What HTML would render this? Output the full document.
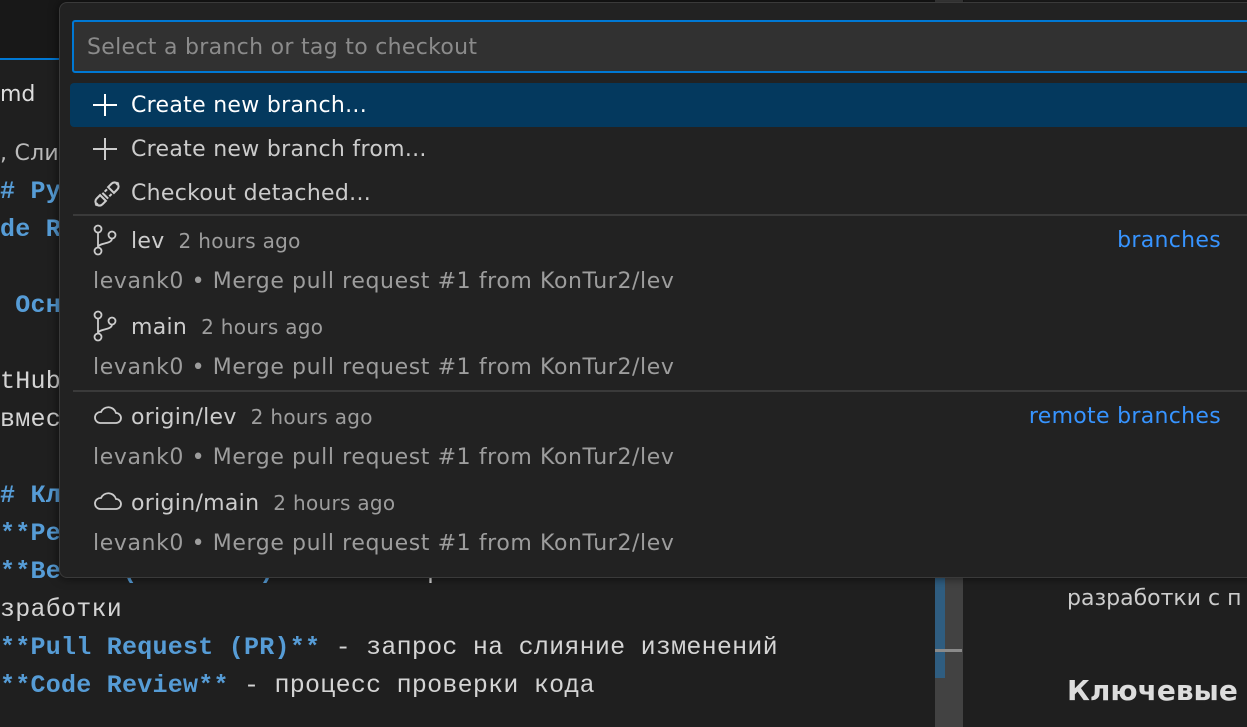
<!DOCTYPE html>
<html><head><meta charset="utf-8"><style>
*{margin:0;padding:0;box-sizing:border-box}
body{width:1247px;height:727px;overflow:hidden;background:#1f1f1f;position:relative;font-family:"DejaVu Sans","Liberation Sans",sans-serif}
.top{position:absolute;left:0;top:0;width:1247px;height:60px;background:#181818}
.tabline{position:absolute;left:0;top:58px;width:70px;height:2px;background:#0078d4}
.tab{position:absolute;left:0;top:60px;width:80px;height:70px;background:#1f1f1f}
.ed{position:absolute;left:0;font-family:"Liberation Mono","DejaVu Sans Mono",monospace;font-size:25px;letter-spacing:0.25px;color:#d4d4d4;white-space:pre;line-height:38px}
.b{color:#569cd6;font-weight:bold}
.sb{position:absolute;left:935px;top:0;width:28px;height:727px;background:#424242}
.sbt{position:absolute;left:935px;top:578px;width:10px;height:100px;background:#2f5d80}
.sbl{position:absolute;left:935px;top:649px;width:27px;height:3px;background:#8a8a8a}
.rp{position:absolute;left:964px;top:0;width:283px;height:727px;background:#1f1f1f}
.qp{position:absolute;left:59px;top:2px;width:1200px;height:576px;background:#222222;border:1px solid #3a3a3a;border-radius:8px;box-shadow:0 0 10px rgba(0,0,0,.6)}
.inp{position:absolute;left:72px;top:20px;width:1185px;height:53px;background:#313131;border:2px solid #0078d4;border-radius:3px;color:#8b8b8b;font-size:22px;letter-spacing:0.3px;padding-left:13px;line-height:52px;white-space:nowrap}
.row{position:absolute;left:70px;width:1190px;height:44px;color:#cccccc;font-size:22px;letter-spacing:0.3px;line-height:46px;white-space:nowrap}
.sel{background:#04395e;border-radius:4px;color:#fff}
.ic{position:absolute;left:22px;top:10px}
.t{position:absolute;left:61px}
.g{color:#9d9d9d;font-size:20px}
.d{position:absolute;left:23px;color:#9d9d9d;font-size:22px;letter-spacing:0.6px}
.lab{position:absolute;right:39px;color:#3794ff;font-size:22px}
.sep{position:absolute;left:73px;width:1180px;height:2px;background:#3a3a3a}
</style></head><body>
<div class="top"></div><div class="tabline"></div>
<div class="tab"><span style="position:absolute;left:0;top:22px;color:#ddd;font-size:22px">md</span></div>
<div class="ed" style="top:135px;color:#bbb;font-family:'DejaVu Sans',sans-serif;font-size:22px">, Сли</div>
<div class="ed" style="top:173px"><span class="b"># Ру</span></div>
<div class="ed" style="top:211px"><span class="b">de Re</span></div>
<div class="ed" style="top:287px"><span class="b"> Осн</span></div>
<div class="ed" style="top:363px">tHub</div>
<div class="ed" style="top:401px">вмест</div>
<div class="ed" style="top:477px"><span class="b"># Кл</span></div>
<div class="ed" style="top:515px"><span class="b">**Ре</span></div>
<div class="ed" style="top:553px"><span class="b">**Ветки (Branches)**</span> - изолированные линии</div>
<div class="ed" style="top:591px">зработки</div>
<div class="ed" style="top:629px"><span class="b">**Pull Request (PR)**</span> - запрос на слияние изменений</div>
<div class="ed" style="top:667px"><span class="b">**Code Review**</span> - процесс проверки кода</div>
<div class="sb"></div><div class="sbt"></div><div class="sbl"></div>
<div class="rp">
<div style="position:absolute;left:103px;top:586px;color:#cccccc;font-size:22px;white-space:nowrap">разработки с п</div>
<div style="position:absolute;left:103px;top:674px;color:#dddddd;font-size:28px;font-weight:bold;white-space:nowrap">Ключевые</div>
</div>
<div class="qp"></div>
<div class="inp">Select a branch or tag to checkout</div>
<div class="row sel" style="top:83px"><svg class="ic" width="26" height="24" viewBox="0 0 26 24"><path d="M13 1v22M1 12h24" stroke="#fff" stroke-width="2"/></svg><span class="t">Create new branch...</span></div>
<div class="row" style="top:127px"><svg class="ic" width="26" height="24" viewBox="0 0 26 24"><path d="M13 1v22M1 12h24" stroke="#ccc" stroke-width="2"/></svg><span class="t">Create new branch from...</span></div>
<div class="row" style="top:171px"><svg class="ic" style="top:8px" width="30" height="30" viewBox="0 0 26 26" fill="none" stroke="#ccc" stroke-width="1.8"><path d="M9 12l5 5M7 14l5 5l-3 3a3.5 3.5 0 0 1-5-5zM14 7l5 5l3-3a3.5 3.5 0 0 0-5-5zM3 23l2-2M23 3l-2 2M11 11l2-2M15 15l2-2"/></svg><span class="t">Checkout detached...</span></div>
<div class="sep" style="top:214px"></div>
<div class="row" style="top:218px"><svg class="ic" style="top:6px" width="26" height="32" viewBox="0 0 26 32" fill="none" stroke="#ccc" stroke-width="1.8"><circle cx="6" cy="5" r="3.5"/><circle cx="6" cy="27" r="3.5"/><circle cx="20" cy="11" r="3.5"/><path d="M6 8.5v15M20 14.5c0 6-14 4-14 9"/></svg><span class="t">lev <span class="g">&nbsp;2 hours ago</span></span><span class="lab">branches</span></div>
<div class="row" style="top:259px"><span class="d">levank0 • Merge pull request #1 from KonTur2/lev</span></div>
<div class="row" style="top:304px"><svg class="ic" style="top:6px" width="26" height="32" viewBox="0 0 26 32" fill="none" stroke="#ccc" stroke-width="1.8"><circle cx="6" cy="5" r="3.5"/><circle cx="6" cy="27" r="3.5"/><circle cx="20" cy="11" r="3.5"/><path d="M6 8.5v15M20 14.5c0 6-14 4-14 9"/></svg><span class="t">main <span class="g">&nbsp;2 hours ago</span></span></div>
<div class="row" style="top:345px"><span class="d">levank0 • Merge pull request #1 from KonTur2/lev</span></div>
<div class="sep" style="top:390px"></div>
<div class="row" style="top:394px"><svg class="ic" width="30" height="22" viewBox="0 0 30 22" fill="none" stroke="#ccc" stroke-width="1.8"><path d="M8 19h16a5 5 0 0 0 0-10a8 8 0 0 0-15-1a5.5 5.5 0 0 0-1 11z"/></svg><span class="t">origin/lev <span class="g">&nbsp;2 hours ago</span></span><span class="lab">remote branches</span></div>
<div class="row" style="top:435px"><span class="d">levank0 • Merge pull request #1 from KonTur2/lev</span></div>
<div class="row" style="top:480px"><svg class="ic" width="30" height="22" viewBox="0 0 30 22" fill="none" stroke="#ccc" stroke-width="1.8"><path d="M8 19h16a5 5 0 0 0 0-10a8 8 0 0 0-15-1a5.5 5.5 0 0 0-1 11z"/></svg><span class="t">origin/main <span class="g">&nbsp;2 hours ago</span></span></div>
<div class="row" style="top:521px"><span class="d">levank0 • Merge pull request #1 from KonTur2/lev</span></div>
</body></html>
